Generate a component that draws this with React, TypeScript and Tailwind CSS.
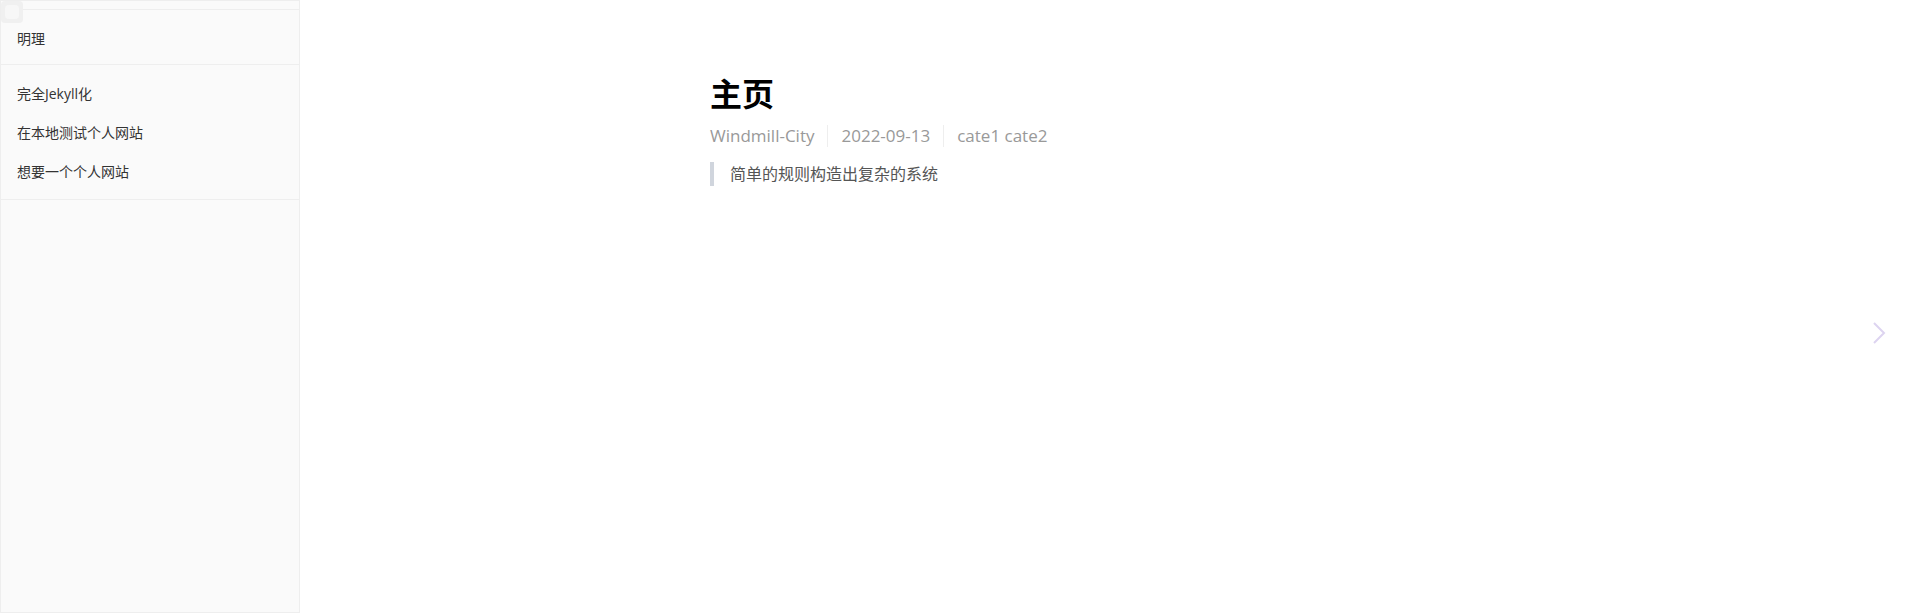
const posts = ['完全Jekyll化', '在本地测试个人网站', '想要一个个人网站'];

const font = { fontFamily: '"Open Sans", "Noto Sans CJK SC", sans-serif' };

export default function App() {
  return (
    <div className="flex h-[613px] w-full bg-white text-[#333]" style={font}>
      <aside className="relative flex w-[300px] shrink-0 flex-col border border-[#eee] bg-[#fafafa]">
        <div className="h-[9px] border-b border-[#eee]" />
        <div className="absolute left-0 top-0 flex h-[22px] w-[22px] items-center justify-center rounded-sm bg-[#f0f0f0]">
          <div className="h-[14px] w-[14px] rounded-sm bg-[#f7f7f7]" />
        </div>
        <div className="flex h-[55px] items-center border-b border-[#eee] px-4 pt-[2px] text-[14px]">明理</div>
        <ul className="border-b border-[#eee] pb-[8px] pt-[9px] text-[14px]">
          {posts.map((p) => (
            <li key={p} className="flex h-[39px] items-center px-4">
              {p}
            </li>
          ))}
        </ul>
      </aside>
      <main className="relative flex-1">
        <article className="mx-auto w-[800px] pt-[72px]">
          <h1 className="text-[32px] font-bold leading-[44px] text-black">主页</h1>
          <div className="mt-[9px] flex items-center text-[17px] leading-[22px] text-[#999]">
            <span className="pr-[13px]">Windmill-City</span>
            <span className="h-[22px] border-l border-[#eee]" />
            <span className="px-[13px]">2022-09-13</span>
            <span className="h-[22px] border-l border-[#eee]" />
            <span className="pl-[13px]">cate1 cate2</span>
          </div>
          <blockquote className="mt-[15px] border-l-4 border-[#d0d5dd] pl-4 text-[16px] leading-[24px] text-[#555]">
            简单的规则构造出复杂的系统
          </blockquote>
        </article>
        <svg
          className="absolute right-[34px] top-[322px]"
          width="14"
          height="22"
          viewBox="0 0 14 22"
          fill="none"
          stroke="#ddd4f0"
          strokeWidth="2"
        >
          <path d="M2 1l10 10L2 21" />
        </svg>
      </main>
    </div>
  );
}
